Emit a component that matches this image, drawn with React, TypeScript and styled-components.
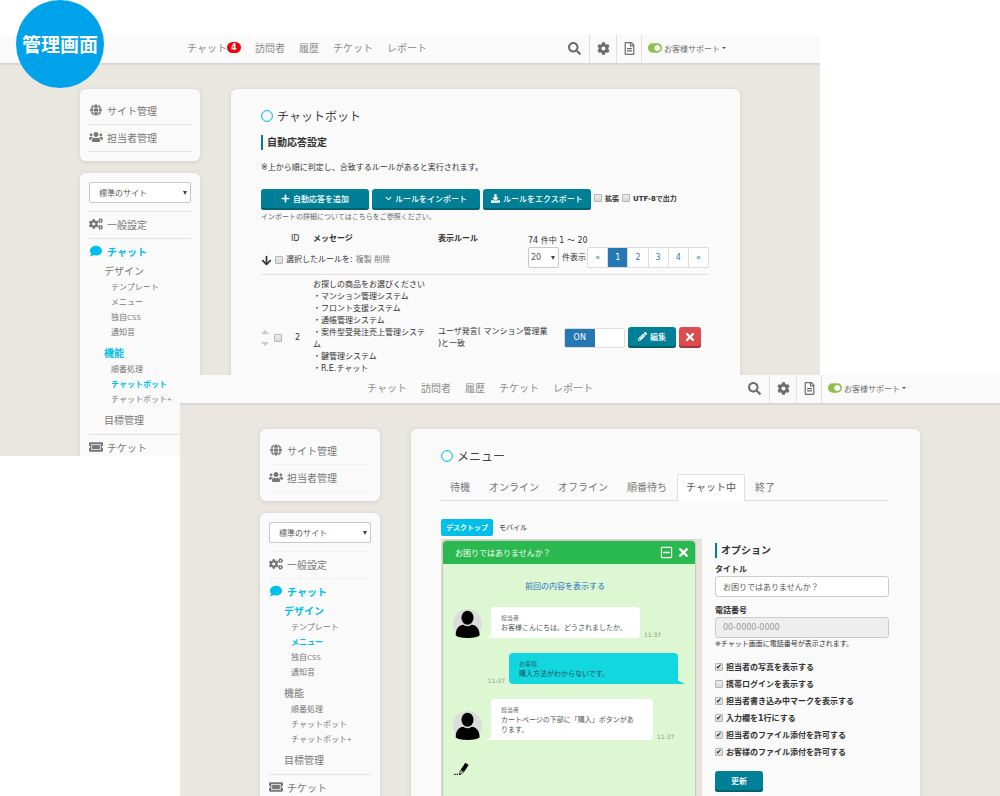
import React, { useState } from "react";
import styled, { createGlobalStyle, css } from "styled-components";
import {
  FaArrowDown,
  FaChevronDown,
  FaCog,
  FaCogs,
  FaComment,
  FaDownload,
  FaGlobe,
  FaPencilAlt,
  FaPlus,
  FaRegFileAlt,
  FaRegMinusSquare,
  FaSearch,
  FaTicketAlt,
  FaTimes,
  FaToggleOn,
  FaUsers,
} from "react-icons/fa";

const uiFont = `"Open Sans", "Noto Sans CJK JP", sans-serif`;
const dataFont = `"DejaVu Sans", "Noto Sans CJK JP", sans-serif`;

const GlobalStyle = createGlobalStyle`
  *, *::before, *::after { box-sizing: border-box; }
  body {
    margin: 0;
    background: #fff;
    font-family: ${uiFont};
    color: #333;
  }
  button, input, select { font-family: inherit; margin: 0; }
  h2, h3, p, ul { margin: 0; padding: 0; }
  ul { list-style: none; }
  a { color: inherit; text-decoration: none; }
  svg { display: block; flex: none; }
`;

/* ---------- page ---------- */

const Stage = styled.main`
  position: relative;
  padding-top: 35px;
`;

const Badge = styled.div`
  position: absolute;
  z-index: 3;
  top: 0;
  left: 16px;
  width: 88px;
  height: 88px;
  border-radius: 50%;
  background: #00a2ea;
  color: #fff;
  font-size: 19px;
  font-weight: 700;
  white-space: nowrap;
  display: flex;
  align-items: center;
  justify-content: center;
`;

const Screen = styled.section<{ $front?: boolean }>`
  position: relative;
  width: 82%;
  aspect-ratio: 820 / 421;
  overflow: hidden;
  background: #eae7e1;
  ${(p) =>
    p.$front &&
    css`
      z-index: 2;
      margin: -81px 0 0 auto;
    `}
`;

const Container = styled.div`
  width: 100%;
  max-width: 660px;
  margin: 0 auto;
`;

/* ---------- top bar ---------- */

const TopBar = styled.header`
  background: #fafafa;
  border-bottom: 2px solid #d6d7d6;
`;

const TopBarInner = styled(Container)`
  height: 28px;
  display: flex;
  align-items: stretch;
  justify-content: space-between;
  padding-left: 107px;
`;

const MainNav = styled.nav`
  display: flex;
  gap: 14px;
  height: 24px;
  align-items: center;
  font-size: 10px;
  color: #8c8c8c;
  white-space: nowrap;
`;

const NavLink = styled.a`
  display: flex;
  align-items: center;
`;

const Count = styled.span`
  width: 14px;
  height: 11px;
  border-radius: 6px;
  background: #f4000c;
  color: #fff;
  font-family: ${dataFont};
  font-size: 8px;
  font-weight: 700;
  line-height: 11px;
  text-align: center;
`;

const Tools = styled.div`
  display: flex;
`;

const Tool = styled.button<{ $width: number }>`
  width: ${(p) => p.$width}px;
  padding: 0 0 2px;
  border: 0;
  border-right: 1px solid #e0e0e0;
  background: none;
  color: #6d6d6d;
  font-size: 13px;
  display: flex;
  align-items: center;
  justify-content: center;
`;

const Account = styled.button`
  width: 98px;
  padding: 0 0 2px 6px;
  border: 0;
  background: none;
  color: #6d6d6d;
  font-size: 8px;
  white-space: nowrap;
  display: flex;
  align-items: center;
  gap: 2px;
`;

const Green = styled.span`
  color: #8fbf4d;
  font-size: 14px;
`;

const Caret = styled.span`
  border: 2px solid transparent;
  border-top-color: #555;
  border-bottom: 0;
`;

/* ---------- body layout ---------- */

const Columns = styled(Container)`
  display: grid;
  grid-template-columns: 120px minmax(0, 1fr);
  column-gap: 31px;
  padding-top: 24px;
`;

const Side = styled.aside`
  display: flex;
  flex-direction: column;
  gap: 12px;
  color: #777;
`;

const cardLook = css`
  background: #fafafa;
  border-radius: 6px;
  box-shadow: 0 1px 5px rgba(90, 85, 70, 0.16);
`;

const Card = styled.div`
  ${cardLook}
  padding: 9px;
`;

const Panel = styled.div`
  ${cardLook}
  padding: 17px 31px 17px 30px;
`;

const SideItem = styled.a<{ $line?: "top" | "bottom"; $active?: boolean; $faint?: boolean }>`
  display: flex;
  align-items: center;
  gap: 4px;
  height: ${(p) => (p.$active ? 25 : 27)}px;
  padding-bottom: ${(p) => (p.$active ? 0 : 2)}px;
  font-size: 10px;
  white-space: nowrap;
  border: 0 solid ${(p) => (p.$faint ? "#f1f1f1" : "#e2e2e2")};
  ${(p) => p.$line === "top" && "border-top-width: 1px;"}
  ${(p) => p.$line === "bottom" && "border-bottom-width: 1px;"}
  ${(p) => p.$active && "color: #00bfe8; font-weight: 700;"}
`;

const SideIcon = styled.span<{ $size?: number }>`
  width: 14px;
  font-size: ${(p) => p.$size ?? 12}px;
  display: flex;
  justify-content: center;
`;

const SideGroup = styled.div`
  margin-bottom: 6px;
  padding-left: 15px;
`;

const GroupTitle = styled.a<{ $active?: boolean }>`
  display: block;
  font-size: 10px;
  line-height: 16px;
  ${(p) => p.$active && "color: #00bfe8; font-weight: 700;"}
`;

const GroupLink = styled.a<{ $active?: boolean }>`
  display: block;
  padding-left: 7px;
  font-size: 8px;
  line-height: 15px;
  white-space: nowrap;
  ${(p) => p.$active && "color: #00bfe8; font-weight: 700;"}
`;

const SelectBox = styled.div<{ $gapBelow?: boolean }>`
  display: grid;
  align-items: center;
  ${(p) => p.$gapBelow && "margin-bottom: 8px;"}
  &::after {
    content: "";
    grid-area: 1 / 1;
    justify-self: end;
    margin-right: 4px;
    border: 2px solid transparent;
    border-top: 4px solid #444;
    border-bottom: 0;
    pointer-events: none;
  }
`;

const Select = styled.select<{ $indent: number }>`
  grid-area: 1 / 1;
  width: 100%;
  height: 21px;
  padding: 0 0 0 ${(p) => p.$indent}px;
  appearance: none;
  border: 1px solid #c8c8c8;
  border-radius: 2px;
  background: #fff;
  color: #555;
  font-size: 8px;
`;

/* ---------- shared content parts ---------- */

const Heading = styled.h2`
  display: flex;
  align-items: center;
  gap: 4px;
  height: 20px;
  font-size: 12px;
  font-weight: 400;
  color: #444;
  &::before {
    content: "";
    width: 12px;
    height: 12px;
    border: 1px solid #1fb9e6;
    border-radius: 50%;
    box-shadow: inset 0 0 1px #1fb9e6;
  }
`;

const SubHeading = styled.h3`
  border-left: 2px solid #007f96;
  padding-left: 4px;
  font-size: 10px;
  line-height: 15px;
  font-weight: 700;
`;

const Button = styled.button<{ $width: number; $danger?: boolean }>`
  width: ${(p) => p.$width}px;
  height: 21px;
  padding: 0 0 2px;
  border: 0;
  border-radius: 3px;
  background: ${(p) => (p.$danger ? "#dc4b4e" : "#007f96")};
  box-shadow: inset 0 -2px 0 ${(p) => (p.$danger ? "#a5383b" : "#04606f")};
  color: #fff;
  font-size: 8px;
  font-weight: 500;
  white-space: nowrap;
  display: flex;
  align-items: center;
  justify-content: center;
  gap: 3px;
`;

const Tick = styled.input.attrs({ type: "checkbox" })`
  appearance: none;
  flex: none;
  width: 8px;
  height: 8px;
  border: 1px solid #b5b5b5;
  border-radius: 1px;
  background: linear-gradient(#eee, #d8d8d8);
  &:checked::after {
    content: "✔";
    display: block;
    font: 7px/6px "DejaVu Sans", sans-serif;
    color: #222;
  }
`;

/* ---------- chatbot screen ---------- */

const Bot = styled.div`
  margin-top: 9px;
  font-family: ${dataFont};
  font-size: 8px;
`;

const Lead = styled.p`
  margin-top: 12px;
  line-height: 12px;
`;

const Actions = styled.div`
  display: flex;
  gap: 3px;
  margin-top: 15px;
`;

const ExportOptions = styled.div`
  display: flex;
  gap: 3px;
  height: 18px;
  align-items: center;
`;

const SmallCheck = styled.label`
  display: flex;
  align-items: center;
  gap: 3px;
  font-size: 7px;
  font-weight: 700;
  white-space: nowrap;
`;

const Caption = styled.p`
  font-size: 7px;
  line-height: 14px;
  color: #666;
`;

const Rules = styled.table`
  width: 100%;
  margin-top: 7px;
  table-layout: fixed;
  border-collapse: collapse;
  line-height: 12px;
  th, td { padding: 0; text-align: left; vertical-align: middle; }
`;

const HeadRow = styled.tr`
  height: 16px;
`;

const BulkRow = styled.tr`
  height: 27px;
`;

const RuleRow = styled.tr`
  height: 127px;
  border-top: 1px solid #e2e2e2;
`;

const PagingCell = styled.td`
  && { vertical-align: top; padding-top: 4px; }
`;

const MessageCell = styled.td`
  && { vertical-align: top; padding: 4px 7px 0 0; }
`;

const Bulk = styled.div`
  display: flex;
  align-items: center;
  gap: 3px;
  white-space: nowrap;
`;

const Muted = styled.span`
  color: #777;
`;

const IdCell = styled.td`
  && { padding-left: 4px; }
`;

const Paging = styled.div`
  display: flex;
  align-items: center;
  white-space: nowrap;
`;

const PageSize = styled.div`
  width: 31px;
  margin-right: 3px;
`;

const Pages = styled.nav`
  display: flex;
  flex: 1;
  margin-left: 1px;
  border: 1px solid #ddd;
  border-radius: 2px;
  background: #fff;
`;

const Page = styled.a<{ $current?: boolean }>`
  flex: 1;
  line-height: 19px;
  text-align: center;
  color: ${(p) => (p.$current ? "#fff" : "#337ab7")};
  background: ${(p) => (p.$current ? "#2678b4" : "#fff")};
  & + & { border-left: 1px solid #ddd; }
`;

const SortHandles = styled.div`
  display: flex;
  align-items: center;
  gap: 5px;
`;

const Arrows = styled.svg`
  width: 8px;
  height: 16px;
  fill: #c9c9c9;
`;

const RowActions = styled.div`
  display: flex;
  align-items: center;
  gap: 3px;
`;

const Switch = styled.button`
  display: grid;
  grid-template-columns: 1fr 1fr;
  width: 61px;
  height: 20px;
  padding: 0;
  border: 1px solid #ddd;
  border-radius: 2px;
  background: #fff;
  overflow: hidden;
  font-size: 8px;
  line-height: 18px;
  color: #fff;
`;

const SwitchOn = styled.span`
  background: #2678b4;
`;

/* ---------- menu screen ---------- */

const Tabs = styled.div`
  display: flex;
  gap: 1px;
  height: 27px;
  margin-top: 8px;
  border-bottom: 1px solid #ddd;
`;

const Tab = styled.button<{ $active?: boolean }>`
  height: 27px;
  padding: 0 8px 3px;
  border: 1px solid ${(p) => (p.$active ? "#ddd" : "transparent")};
  border-bottom: 0;
  border-radius: 2px 2px 0 0;
  background: ${(p) => (p.$active ? "#fff" : "none")};
  color: ${(p) => (p.$active ? "#555" : "#777")};
  font-size: 10px;
  white-space: nowrap;
`;

const Devices = styled.div`
  display: flex;
  align-items: center;
  gap: 1px;
  margin-top: 18px;
`;

const Device = styled.button<{ $active?: boolean }>`
  height: 17px;
  padding: 0 5px 1px;
  border: 0;
  border-radius: 2px;
  background: ${(p) => (p.$active ? "#00bfe8" : "none")};
  color: ${(p) => (p.$active ? "#fff" : "#555")};
  font-size: 7px;
  font-weight: ${(p) => (p.$active ? 700 : 500)};
`;

const MenuBody = styled.div`
  display: grid;
  grid-template-columns: 261px minmax(0, 1fr);
  column-gap: 13px;
  margin-top: 3px;
  font-family: ${dataFont};
`;

const Preview = styled.div`
  min-height: 270px;
  padding: 1px 7px 0 2px;
  background: #e7e4de;
  border-top: 1px solid #dcdad6;
  display: flex;
`;

const Chat = styled.div`
  flex: 1;
  background: #def7d3;
  border-radius: 4px 4px 0 0;
  box-shadow: 0 0 2px #777;
`;

const ChatBar = styled.div`
  display: flex;
  align-items: center;
  gap: 4px;
  height: 23px;
  padding: 0 5px 0 12px;
  border-radius: 4px 4px 0 0;
  background: #29b94e;
  color: #fff;
  font-size: 8px;
`;

const ChatTitle = styled.span`
  flex: 1;
`;

const BarButton = styled.button`
  padding: 0;
  border: 0;
  background: none;
  color: #fff;
  font-size: 13px;
`;

const Log = styled.div`
  display: flex;
  flex-direction: column;
  padding: 17px 10px 0;
`;

const HistoryLink = styled.a`
  align-self: center;
  margin: 0 8px 14px 0;
  font-size: 8px;
  line-height: 12px;
  color: #1a6fc0;
`;

const Message = styled.div<{ $own?: boolean }>`
  display: flex;
  align-items: flex-end;
  margin-bottom: 15px;
  ${(p) => p.$own && "flex-direction: row-reverse; padding-right: 7px;"}
`;

const Avatar = styled.svg`
  width: 29px;
  height: 29px;
  margin-right: 9px;
`;

const Bubble = styled.div<{ $own?: boolean }>`
  position: relative;
  max-width: 162px;
  padding: 5px 13px 5px 10px;
  border-radius: 4px;
  background: #fff;
  color: #555;
  font-size: 7px;
  line-height: 10px;
  &::after {
    content: "";
    position: absolute;
    bottom: 0;
    left: -6px;
    border: 0 solid transparent;
    border-left-width: 10px;
    border-bottom: 5px solid #fff;
  }
  ${(p) =>
    p.$own &&
    css`
      width: 169px;
      max-width: none;
      background: #13d7df;
      color: #14525a;
      &::after {
        left: auto;
        right: -7px;
        border-left-width: 0;
        border-right-width: 10px;
        border-bottom-color: #13d7df;
      }
    `}
`;

const Sender = styled.div`
  font-size: 6px;
  line-height: 11px;
  opacity: 0.85;
`;

const Time = styled.time`
  margin: 0 4px;
  font-size: 6px;
  line-height: 6px;
  color: #8d9a88;
`;

const Typing = styled.svg`
  width: 16px;
  height: 14px;
  margin: 7px 0 0 1px;
`;

const Options = styled.form`
  margin-top: 4px;
  font-size: 8px;
`;

const Field = styled.div`
  margin-bottom: 7px;
`;

const FieldLabel = styled.label`
  display: block;
  font-weight: 700;
  line-height: 13px;
`;

const TextInput = styled.input`
  display: block;
  width: 100%;
  height: 21px;
  padding: 0 7px;
  border: 1px solid #ccc;
  border-radius: 3px;
  background: #fff;
  color: #555;
  font-size: 8px;
  &:disabled { background: #eee; }
  &::placeholder { color: #999; }
`;

const Note = styled.p`
  font-size: 7px;
  line-height: 12px;
`;

const CheckList = styled.div`
  margin: 8px 0 11px;
`;

const CheckLine = styled.label`
  display: flex;
  align-items: center;
  gap: 3px;
  height: 17px;
  font-weight: 700;
  white-space: nowrap;
`;

const FieldSet = styled.div`
  margin-top: 5px;
`;

/* ---------- components ---------- */

function Header({ unread }: { unread?: number }) {
  return (
    <TopBar>
      <TopBarInner>
        <MainNav>
          <NavLink href="#chat">
            チャット
            {unread ? <Count>{unread}</Count> : null}
          </NavLink>
          <NavLink href="#visitors">訪問者</NavLink>
          <NavLink href="#history">履歴</NavLink>
          <NavLink href="#tickets">チケット</NavLink>
          <NavLink href="#reports">レポート</NavLink>
        </MainNav>
        <Tools>
          <Tool $width={31} aria-label="検索"><FaSearch /></Tool>
          <Tool $width={27} aria-label="設定"><FaCog /></Tool>
          <Tool $width={25} aria-label="文書"><FaRegFileAlt /></Tool>
          <Account>
            <Green><FaToggleOn /></Green>
            お客様サポート
            <Caret />
          </Account>
        </Tools>
      </TopBarInner>
    </TopBar>
  );
}

const groups = [
  { title: "デザイン", links: ["テンプレート", "メニュー", "独自CSS", "通知音"] },
  { title: "機能", links: ["順番処理", "チャットボット", "チャットボット+"] },
  { title: "目標管理", links: [] },
];

function Sidebar({ group, page, faint }: { group: string; page: string; faint?: boolean }) {
  return (
    <Side>
      <Card>
        <SideItem href="#site" $line="bottom" $faint={faint}>
          <SideIcon><FaGlobe /></SideIcon>サイト管理
        </SideItem>
        <SideItem href="#staff" $line="bottom" $faint={faint}>
          <SideIcon $size={14}><FaUsers /></SideIcon>担当者管理
        </SideItem>
      </Card>
      <Card>
        <SelectBox $gapBelow>
          <Select $indent={9} aria-label="サイト">
            <option>標準のサイト</option>
          </Select>
        </SelectBox>
        <SideItem href="#general" $line="top" $faint={faint}>
          <SideIcon $size={14}><FaCogs /></SideIcon>一般設定
        </SideItem>
        <SideItem href="#chat" $line="top" $active $faint={faint}>
          <SideIcon><FaComment /></SideIcon>チャット
        </SideItem>
        {groups.map((g) => (
          <SideGroup key={g.title}>
            <GroupTitle href="#group" $active={g.title === group}>{g.title}</GroupTitle>
            {g.links.map((l) => (
              <GroupLink key={l} href="#page" $active={l === page}>{l}</GroupLink>
            ))}
          </SideGroup>
        ))}
        <SideItem href="#ticket" $line="top">
          <SideIcon $size={14}><FaTicketAlt /></SideIcon>チケット
        </SideItem>
      </Card>
    </Side>
  );
}

const ruleMessage = [
  "お探しの商品をお選びください",
  "・マンション管理システム",
  "・フロント支援システム",
  "・通帳管理システム",
  "・案件型受発注売上管理システム",
  "・鍵管理システム",
  "・R.E.チャット",
];

function ChatbotScreen() {
  return (
    <Panel>
      <Heading>チャットボット</Heading>
      <Bot>
        <SubHeading>自動応答設定</SubHeading>
        <Lead>※上から順に判定し、合致するルールがあると実行されます。</Lead>
        <Actions>
          <Button $width={108}><FaPlus size={9} />自動応答を追加</Button>
          <Button $width={108}><FaChevronDown size={7} />ルールをインポート</Button>
          <Button $width={108}><FaDownload size={9} />ルールをエクスポート</Button>
          <ExportOptions>
            <SmallCheck><Tick />拡張</SmallCheck>
            <SmallCheck><Tick />UTF-8で出力</SmallCheck>
          </ExportOptions>
        </Actions>
        <Caption>インポートの詳細についてはこちらをご参照ください。</Caption>
        <Rules>
          <colgroup>
            <col style={{ width: 30 }} />
            <col style={{ width: 22 }} />
            <col style={{ width: 125 }} />
            <col style={{ width: 90 }} />
            <col style={{ width: 36 }} />
            <col />
          </colgroup>
          <thead>
            <HeadRow>
              <td />
              <td>ID</td>
              <th>メッセージ</th>
              <th>表示ルール</th>
              <PagingCell colSpan={2} rowSpan={2}>
                74 件中 1 ～ 20
                <Paging>
                  <PageSize>
                    <SelectBox>
                      <Select $indent={2} aria-label="表示件数"><option>20</option></Select>
                    </SelectBox>
                  </PageSize>
                  件表示
                  <Pages>
                    {["«", "1", "2", "3", "4", "»"].map((n) => (
                      <Page key={n} href="#p" $current={n === "1"}>{n}</Page>
                    ))}
                  </Pages>
                </Paging>
              </PagingCell>
            </HeadRow>
            <BulkRow>
              <td colSpan={4}>
                <Bulk>
                  <FaArrowDown size={11} />
                  <Tick aria-label="すべて選択" />
                  選択したルールを: <Muted>複製 削除</Muted>
                </Bulk>
              </td>
            </BulkRow>
          </thead>
          <tbody>
            <RuleRow>
              <td>
                <SortHandles>
                  <Arrows viewBox="0 0 8 16">
                    <path d="M4 0L8 4H0ZM4 16L8 12H0Z" />
                  </Arrows>
                  <Tick aria-label="ルール 2" />
                </SortHandles>
              </td>
              <IdCell>2</IdCell>
              <MessageCell>
                {ruleMessage.map((line) => (
                  <div key={line}>{line}</div>
                ))}
              </MessageCell>
              <td colSpan={2}>
                ユーザ発言( マンション管理業
                <br />
                )と一致
              </td>
              <td>
                <RowActions>
                  <Switch><SwitchOn>ON</SwitchOn></Switch>
                  <Button $width={48}><FaPencilAlt size={9} />編集</Button>
                  <Button $width={22} $danger aria-label="削除"><FaTimes size={12} /></Button>
                </RowActions>
              </td>
            </RuleRow>
          </tbody>
        </Rules>
      </Bot>
    </Panel>
  );
}

function Person() {
  return (
    <Avatar viewBox="0 0 86 86">
      <circle cx="43" cy="43" r="43" fill="#dcdcdc" />
      <ellipse cx="43" cy="26" rx="18" ry="21" />
      <path d="M8 78C8 57 19 48 31 47Q43 56 55 47C69 48 79 59 79 78Q71 86 43 86T8 78Z" />
    </Avatar>
  );
}

const optionList: [string, boolean][] = [
  ["担当者の写真を表示する", true],
  ["携帯ログインを表示する", false],
  ["担当者書き込み中マークを表示する", true],
  ["入力欄を1行にする", true],
  ["担当者のファイル添付を許可する", true],
  ["お客様のファイル添付を許可する", true],
];

function MenuScreen() {
  const [title, setTitle] = useState("お困りではありませんか？");
  return (
    <Panel>
      <Heading>メニュー</Heading>
      <Tabs>
        {["待機", "オンライン", "オフライン", "順番待ち", "チャット中", "終了"].map((t) => (
          <Tab key={t} $active={t === "チャット中"}>{t}</Tab>
        ))}
      </Tabs>
      <Devices>
        <Device $active>デスクトップ</Device>
        <Device>モバイル</Device>
      </Devices>
      <MenuBody>
        <Preview>
          <Chat>
            <ChatBar>
              <ChatTitle>{title}</ChatTitle>
              <BarButton aria-label="最小化"><FaRegMinusSquare /></BarButton>
              <BarButton aria-label="閉じる"><FaTimes /></BarButton>
            </ChatBar>
            <Log>
              <HistoryLink href="#log">前回の内容を表示する</HistoryLink>
              <Message>
                <Person />
                <Bubble>
                  <Sender>担当者</Sender>
                  お客様こんにちは。どうされましたか。
                </Bubble>
                <Time>11:37</Time>
              </Message>
              <Message $own>
                <Bubble $own>
                  <Sender>お客様</Sender>
                  購入方法がわからないです。
                </Bubble>
                <Time>11:37</Time>
              </Message>
              <Message>
                <Person />
                <Bubble>
                  <Sender>担当者</Sender>
                  カートページの下部に「購入」ボタンがあります。
                </Bubble>
                <Time>11:37</Time>
              </Message>
              <Typing viewBox="0 0 48 42">
                <path d="M34 2L44 9L30 30L20 23Z" />
                <path d="M19 25L28 31L17 37Z" fill="none" stroke="#000" strokeWidth="2" />
                <path d="M1 35h4v4H1zM8 35h4v4H8zM15 35h5v4h-5z" />
              </Typing>
            </Log>
          </Chat>
        </Preview>
        <Options onSubmit={(e) => e.preventDefault()}>
          <SubHeading>オプション</SubHeading>
          <FieldSet>
            <Field>
              <FieldLabel htmlFor="title">タイトル</FieldLabel>
              <TextInput id="title" value={title} onChange={(e) => setTitle(e.target.value)} />
            </Field>
            <FieldLabel htmlFor="tel">電話番号</FieldLabel>
            <TextInput id="tel" placeholder="00-0000-0000" disabled />
            <Note>※チャット画面に電話番号が表示されます。</Note>
          </FieldSet>
          <CheckList>
            {optionList.map(([label, on]) => (
              <CheckLine key={label}>
                <Tick defaultChecked={on} />
                {label}
              </CheckLine>
            ))}
          </CheckList>
          <Button $width={48}>更新</Button>
        </Options>
      </MenuBody>
    </Panel>
  );
}

export default function App() {
  return (
    <>
      <GlobalStyle />
      <Stage>
        <Badge>管理画面</Badge>
        <Screen>
          <Header unread={4} />
          <Columns>
            <Sidebar group="機能" page="チャットボット" />
            <ChatbotScreen />
          </Columns>
        </Screen>
        <Screen $front>
          <Header />
          <Columns>
            <Sidebar group="デザイン" page="メニュー" faint />
            <MenuScreen />
          </Columns>
        </Screen>
      </Stage>
    </>
  );
}
